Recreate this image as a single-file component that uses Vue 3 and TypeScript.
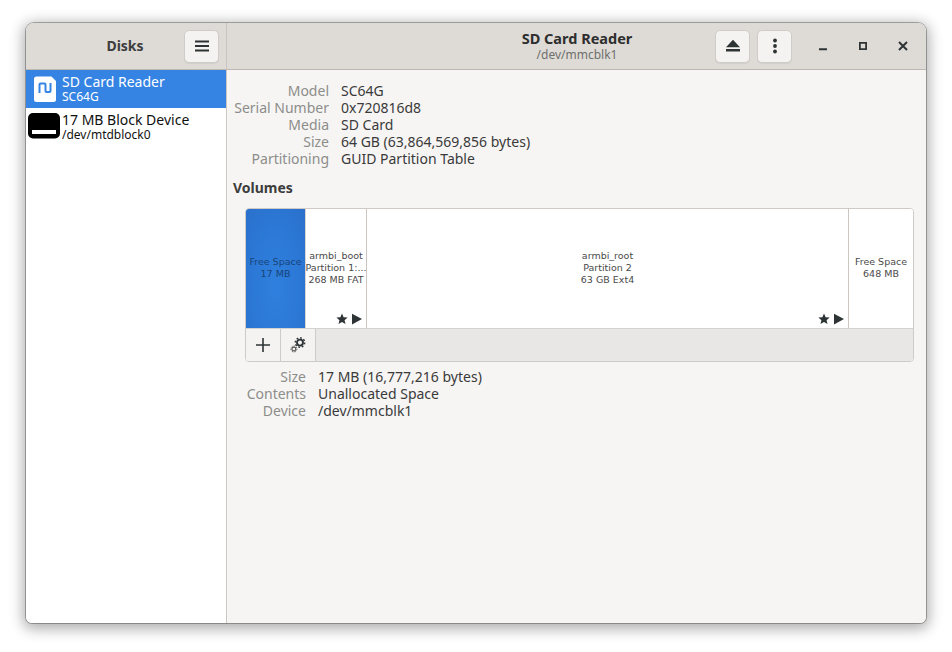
<script setup lang="ts">
interface Row { k: string; v: string }
const driveRows: Row[] = [
  { k: 'Model', v: 'SC64G' },
  { k: 'Serial Number', v: '0x720816d8' },
  { k: 'Media', v: 'SD Card' },
  { k: 'Size', v: '64 GB (63,864,569,856 bytes)' },
  { k: 'Partitioning', v: 'GUID Partition Table' },
]
const volRows: Row[] = [
  { k: 'Size', v: '17 MB (16,777,216 bytes)' },
  { k: 'Contents', v: 'Unallocated Space' },
  { k: 'Device', v: '/dev/mmcblk1' },
]
</script>

<template>
  <div class="stage">
    <div class="window">
      <header class="titlebar">
        <div class="tb-left">
          <span class="app-title">Disks</span>
          <button class="btn menu-btn">
            <svg width="16" height="16" viewBox="0 0 16 16"><path d="M1 2.500h14v2H1zM1 7h14v2H1zM1 11.500h14v2H1z" fill="#2e3436"/></svg>
          </button>
        </div>
        <div class="tb-right">
          <div class="tb-center">
            <div class="t1">SD Card Reader</div>
            <div class="t2">/dev/mmcblk1</div>
          </div>
          <div class="tb-actions">
            <button class="btn">
              <svg width="16" height="16" viewBox="0 0 16 16"><path d="M8 1.800 15 9.200H1zM1 11h14v2.400H1z" fill="#2e3436"/></svg>
            </button>
            <button class="btn">
              <svg width="16" height="16" viewBox="0 0 16 16"><circle cx="8" cy="2.500" r="1.900" fill="#2e3436"/><circle cx="8" cy="8" r="1.900" fill="#2e3436"/><circle cx="8" cy="13.500" r="1.900" fill="#2e3436"/></svg>
            </button>
          </div>
          <div class="wm">
            <svg width="10" height="10" viewBox="0 0 10 10"><path d="M1 7.200h8v2H1z" fill="#2e3436"/></svg>
            <svg width="10" height="10" viewBox="0 0 10 10"><path d="M1.900 1.900h6.200v6.200H1.900z" fill="none" stroke="#2e3436" stroke-width="1.800"/></svg>
            <svg width="10" height="10" viewBox="0 0 10 10"><path d="M1 1l8 8M9 1 1 9" stroke="#2e3436" stroke-width="2" fill="none"/></svg>
          </div>
        </div>
      </header>

      <div class="content">
        <aside class="sidebar">
          <div class="drive selected">
            <svg class="sd-icon" width="24" height="28" viewBox="0 0 24 28">
              <path d="M3.500 1.500h15L23 6v18.500a2.500 2.500 0 0 1-2.500 2.500h-17A2.500 2.500 0 0 1 1 24.500V4a2.500 2.500 0 0 1 2.500-2.500z" fill="#fff"/>
              <path d="M6.500 18V9.500a1 1 0 0 1 1-1h4a1 1 0 0 1 1 1V16a1 1 0 0 0 1 1h3a1 1 0 0 0 1-1V8" fill="none" stroke="#3584e4" stroke-width="2"/>
            </svg>
            <div class="drive-text sd-text">
              <div class="d1">SD Card Reader</div>
              <div class="d2">SC64G</div>
            </div>
          </div>
          <div class="drive block">
            <svg class="blk-icon" width="33" height="28" viewBox="0 0 33 28">
              <rect x="0" y="1" width="32" height="25.500" rx="5" fill="#000"/>
              <rect x="4" y="18" width="24" height="4" fill="#fff"/>
            </svg>
            <div class="drive-text">
              <div class="d1">17 MB Block Device</div>
              <div class="d2">/dev/mtdblock0</div>
            </div>
          </div>
        </aside>

        <main class="main">
          <dl class="kv drive-kv">
            <template v-for="r in driveRows" :key="r.k">
              <dt>{{ r.k }}</dt><dd>{{ r.v }}</dd>
            </template>
          </dl>
          <h2 class="volumes">Volumes</h2>
          <div class="volbox">
            <div class="parts">
              <div class="part p-free-sel">
                <span>Free Space</span><span>17 MB</span>
              </div>
              <div class="part p-boot">
                <span>armbi_boot</span><span class="ell">Partition 1:...</span><span>268 MB FAT</span>
                <div class="marks">
                  <svg width="12" height="12" viewBox="0 0 12 12"><path d="M6 .6 7.600 4.300l4 .3-3.050 2.600 1 3.900L6 9 2.450 11.100l1-3.900L.4 4.600l4-.3z" fill="#2e3436"/></svg>
                  <svg width="12" height="12" viewBox="0 0 12 12"><path d="M1 .8v10.700L11 6.100z" fill="#2e3436"/></svg>
                </div>
              </div>
              <div class="part p-root">
                <span>armbi_root</span><span>Partition 2</span><span>63 GB Ext4</span>
                <div class="marks">
                  <svg width="12" height="12" viewBox="0 0 12 12"><path d="M6 .6 7.600 4.300l4 .3-3.050 2.600 1 3.900L6 9 2.450 11.100l1-3.900L.4 4.600l4-.3z" fill="#2e3436"/></svg>
                  <svg width="12" height="12" viewBox="0 0 12 12"><path d="M1 .8v10.700L11 6.100z" fill="#2e3436"/></svg>
                </div>
              </div>
              <div class="part p-free">
                <span>Free Space</span><span>648 MB</span>
              </div>
            </div>
            <div class="toolbar">
              <button class="tool">
                <svg width="16" height="16" viewBox="0 0 16 16"><path d="M7.200 1h1.600v6.200H15v1.600H8.800V15H7.200V8.800H1V7.200h6.200z" fill="#2e3436"/></svg>
              </button>
              <button class="tool">
                <svg width="16" height="16" viewBox="0 0 16 16">
                  <circle cx="10" cy="5.600" r="3" fill="none" stroke="#2e3436" stroke-width="1.900"/>
                  <circle cx="10" cy="5.600" r="4.700" fill="none" stroke="#2e3436" stroke-width="1.400" stroke-dasharray="1.800 1.800"/>
                  <circle cx="3.900" cy="12" r="1.900" fill="none" stroke="#555" stroke-width="1.100"/>
                  <circle cx="3.900" cy="12" r="3" fill="none" stroke="#555" stroke-width="1" stroke-dasharray="1.400 1.300"/>
                </svg>
              </button>
            </div>
          </div>
          <dl class="kv vol-kv">
            <template v-for="r in volRows" :key="r.k">
              <dt>{{ r.k }}</dt><dd>{{ r.v }}</dd>
            </template>
          </dl>
        </main>
      </div>
    </div>
  </div>
</template>

<style>
html, body { margin: 0; background: #fff; }
</style>

<style scoped>
.stage {
  width: 952px; height: 652px; box-sizing: border-box;
  padding: 23px 26px 29px; overflow: hidden;
  font-family: "Noto Sans", "Open Sans", sans-serif;
}
.window {
  width: 900px; height: 600px; border-radius: 8px 8px 6px 6px; overflow: hidden;
  background: #f6f5f4; display: flex; flex-direction: column;
  box-shadow: 0 0 0 1px rgba(0,0,0,.28), 0 3px 14px 3px rgba(0,0,0,.32);
}
.titlebar { flex: none; display: flex; background: #dedbd7; border-bottom: 1px solid #bfb8b1; height: 46px; }
.tb-left { flex: none; display: flex; align-items: center; box-sizing: border-box; padding-right: 7px; border-right: 1px solid #c9c4bf; width: 201px; }
.app-title { flex: 1; text-align: center; font-weight: 700; font-size: 14px; color: #3d3d3d; padding: 0 0 2px 40px; }
.btn {
  width: 35px; height: 33px; padding: 0; margin: 0; border: 1px solid #d0ccc7; border-radius: 5px;
  background: #f4f3f1; display: flex; align-items: center; justify-content: center;
  box-shadow: 0 1px 1px rgba(0,0,0,.06);
}
.tb-right { flex: 1; display: flex; align-items: center; min-width: 0; }
.tb-center { flex: 1; text-align: center; padding-left: 222px; line-height: 15px; }
.t1 { font-weight: 700; font-size: 14.500px; color: #2e2e2e; }
.t2 { font-size: 12px; color: #6f6f6c; margin-top: 1px; }
.tb-actions { display: flex; gap: 7px; margin-left: 10px; }
.wm { display: flex; align-items: center; gap: 30px; padding: 0 18px 0 26px; }
.content { flex: 1; display: flex; min-height: 0; }
.sidebar { width: 200px; flex: none; background: #fff; border-right: 1px solid #cdc7c2; }
.drive { display: flex; align-items: center; height: 38px; color: #111; }
.drive.selected { background: #3584e4; color: #fff; }
.sd-icon { margin-left: 7px; margin-right: 5px; flex: none; }
.blk-icon { margin-left: 2px; margin-right: 1px; margin-bottom: 2px; flex: none; }
.drive-text { padding-bottom: 2px; }
.d1 { font-size: 14px; line-height: 17px; white-space: nowrap; }
.d2 { font-size: 12px; line-height: 14px; white-space: nowrap; }
.main { flex: 1; min-width: 0; padding: 12px 12px 0 6px; background: #f6f5f4; }
.kv { margin: 0; display: grid; row-gap: 0; font-size: 14px; line-height: 17px; }
.drive-kv { grid-template-columns: 96px 1fr; column-gap: 12px; }
.vol-kv { grid-template-columns: 60px 1fr; column-gap: 12px; margin: 6px 0 0 13px; }
dt { text-align: right; color: #8d8d8a; white-space: nowrap; }
dd { margin: 0; color: #3a3a3a; white-space: nowrap; }
.volumes { margin: 12px 0 12px; font-size: 14px; line-height: 17px; font-weight: 700; color: #3d3d3d; }
.volbox {
  margin-left: 12px; height: 152px; border: 1px solid #cfcac5; border-radius: 4px;
  overflow: hidden; display: flex; flex-direction: column; background: #fff;
}
.parts { height: 119px; flex: none; display: flex; }
.part {
  position: relative; display: flex; flex-direction: column; align-items: center; justify-content: center;
  box-sizing: border-box; font-family: "DejaVu Sans", sans-serif; font-size: 9.500px; line-height: 12px;
  color: #4a4a4a; overflow: hidden; white-space: nowrap; background: #fff; padding-bottom: 2px;
}
.p-free-sel { width: 60px; background: radial-gradient(ellipse at 50% 65%, #2f80de 0%, #2c78d6 55%, #2a70cb 100%); color: #17447a; border-right: 1px solid #d8d5d2; }
.p-boot { width: 61px; border-right: 1px solid #cbc6c1; }
.p-root { width: 482px; border-right: 1px solid #cbc6c1; }
.p-free { flex: 1; }
.marks { position: absolute; right: 3px; bottom: 3px; display: flex; gap: 3px; }
.toolbar { flex: 1; display: flex; background: #e8e7e5; border-top: 1px solid #d5d1cd; }
.tool {
  width: 35px; padding: 0; margin: 0; border: 0; border-right: 1px solid #cfcac5; background: #f4f3f1;
  display: flex; align-items: center; justify-content: center;
}
</style>
